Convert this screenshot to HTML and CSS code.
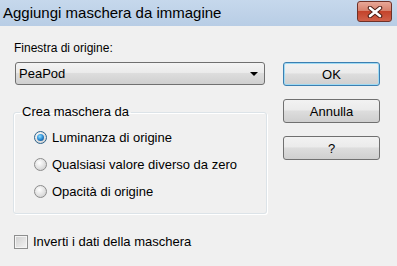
FILE: index.html
```html
<!DOCTYPE html>
<html lang="it">
<head>
  <meta charset="UTF-8">
  <title>Aggiungi maschera da immagine</title>
  <link rel="stylesheet" href="styles.css">
</head>
<body>
  <div class="dialog">
    <div class="titlebar">
      <span class="title">Aggiungi maschera da immagine</span>
      <button class="close" aria-label="Chiudi">
        <svg width="16" height="12" viewBox="0 0 16 12">
          <path d="M3 2 L13 10 M13 2 L3 10" stroke="#4a1a12" stroke-width="4.5" stroke-linecap="round"/>
          <path d="M3 2 L13 10 M13 2 L3 10" stroke="#fff" stroke-width="2.6" stroke-linecap="round"/>
        </svg>
      </button>
    </div>

    <div class="content">
      <div class="left">
        <label class="label">Finestra di origine:</label>
        <div class="select">
          <span>PeaPod</span>
          <span class="arrow"></span>
        </div>

        <fieldset class="group">
          <legend>Crea maschera da</legend>
          <div class="radios">
            <div class="option"><span class="radio checked"></span>Luminanza di origine</div>
            <div class="option"><span class="radio"></span>Qualsiasi valore diverso da zero</div>
            <div class="option"><span class="radio"></span>Opacità di origine</div>
          </div>
        </fieldset>

        <div class="option check-row"><span class="checkbox"></span>Inverti i dati della maschera</div>
      </div>

      <div class="right">
        <button class="btn default">OK</button>
        <button class="btn">Annulla</button>
        <button class="btn">?</button>
      </div>
    </div>
  </div>
</body>
</html>
```

FILE: styles.css
```css
body {
  margin: 0;
  padding: 0;
  background-color: #f0f0f0;
  font-family: "Liberation Sans", Arial, sans-serif;
  font-size: 12px;
  color: #000;
}
.dialog {
  width: 397px;
  height: 266px;
  overflow: hidden;
}
.titlebar {
  height: 26px;
  display: flex;
  align-items: center;
  justify-content: space-between;
  background: linear-gradient(#c6d8ec, #b8cde5);
}
.title {
  font-family: "Liberation Sans", Arial, sans-serif;
  font-size: 15px;
  padding-left: 3px;
  color: #000;
  margin-top: -1px;
}
.close {
  width: 35px;
  height: 21px;
  margin: -3px 5px 0 0;
  padding: 0;
  border: 1px solid #6f3128;
  border-radius: 3px;
  background: linear-gradient(#e8a898 0%, #d7826e 45%, #c4432b 50%, #d0614a 100%);
  display: flex;
  align-items: center;
  justify-content: center;
}
.content {
  display: flex;
}
.left {
  width: 254px;
  margin-left: 13px;
  padding-top: 15px;
}
.label {
  display: block;
  line-height: 14px;
  margin-left: 1px;
}
.select {
  margin: 7px 2px 0 2px;
  height: 21px;
  border: 1px solid #707070;
  border-radius: 3px;
  background: linear-gradient(#f4f4f4 0%, #ebebeb 45%, #dddddd 50%, #cfcfcf 100%);
  display: flex;
  align-items: center;
  justify-content: space-between;
  padding: 0 6px 0 3px;
  font-size: 13px;
}
.arrow {
  width: 0;
  height: 0;
  border-left: 4px solid transparent;
  border-right: 4px solid transparent;
  border-top: 4px solid #000;
}
.group {
  margin: 20px 0 0 0;
  padding: 5px 0 8px 6px;
  border: 1px solid #dce3e8;
  border-radius: 3px;
  box-shadow: 1px 1px 0 #fff, inset 1px 1px 0 #fff;
}
.group legend {
  padding: 0 2px;
  line-height: 14px;
  font-size: 13px;
}
.radios {
  padding-left: 14px;
}
.option {
  display: flex;
  align-items: center;
  height: 27px;
  font-size: 13px;
}
.radio {
  width: 11px;
  height: 11px;
  border: 1px solid #8c8c8c;
  border-radius: 50%;
  margin-right: 5px;
  background: radial-gradient(circle at 40% 35%, #ffffff 0%, #e6e6e6 45%, #c8c8c8 100%);
  display: flex;
  align-items: center;
  justify-content: center;
}
.radio.checked {
  border-color: #2c628b;
}
.radio.checked::after {
  content: "";
  width: 7px;
  height: 7px;
  border-radius: 50%;
  background: radial-gradient(circle at 40% 35%, #8fe0ff 0%, #2a8ad4 50%, #0b3f73 100%);
}
.check-row {
  margin-top: 14px;
  margin-left: 1px;
}
.checkbox {
  width: 12px;
  height: 12px;
  border: 1px solid #8e8f8f;
  margin-right: 5px;
  background: linear-gradient(135deg, #cfcfcf, #f4f4f4);
  box-shadow: inset 0 0 0 1px #f4f4f4;
}
.right {
  margin-left: 16px;
  padding-top: 36px;
  display: flex;
  flex-direction: column;
  gap: 13px;
}
.btn {
  width: 97px;
  height: 24px;
  border: 1px solid #707070;
  border-radius: 3px;
  background: linear-gradient(#f2f2f2 0%, #ebebeb 45%, #dddddd 50%, #cfcfcf 100%);
  font-family: "Liberation Sans", Arial, sans-serif;
  font-size: 13px;
  color: #000;
  padding: 0;
}
.btn.default {
  border-color: #3c7fb1;
  box-shadow: inset 0 0 0 1px #9fdaf3;
}
```
